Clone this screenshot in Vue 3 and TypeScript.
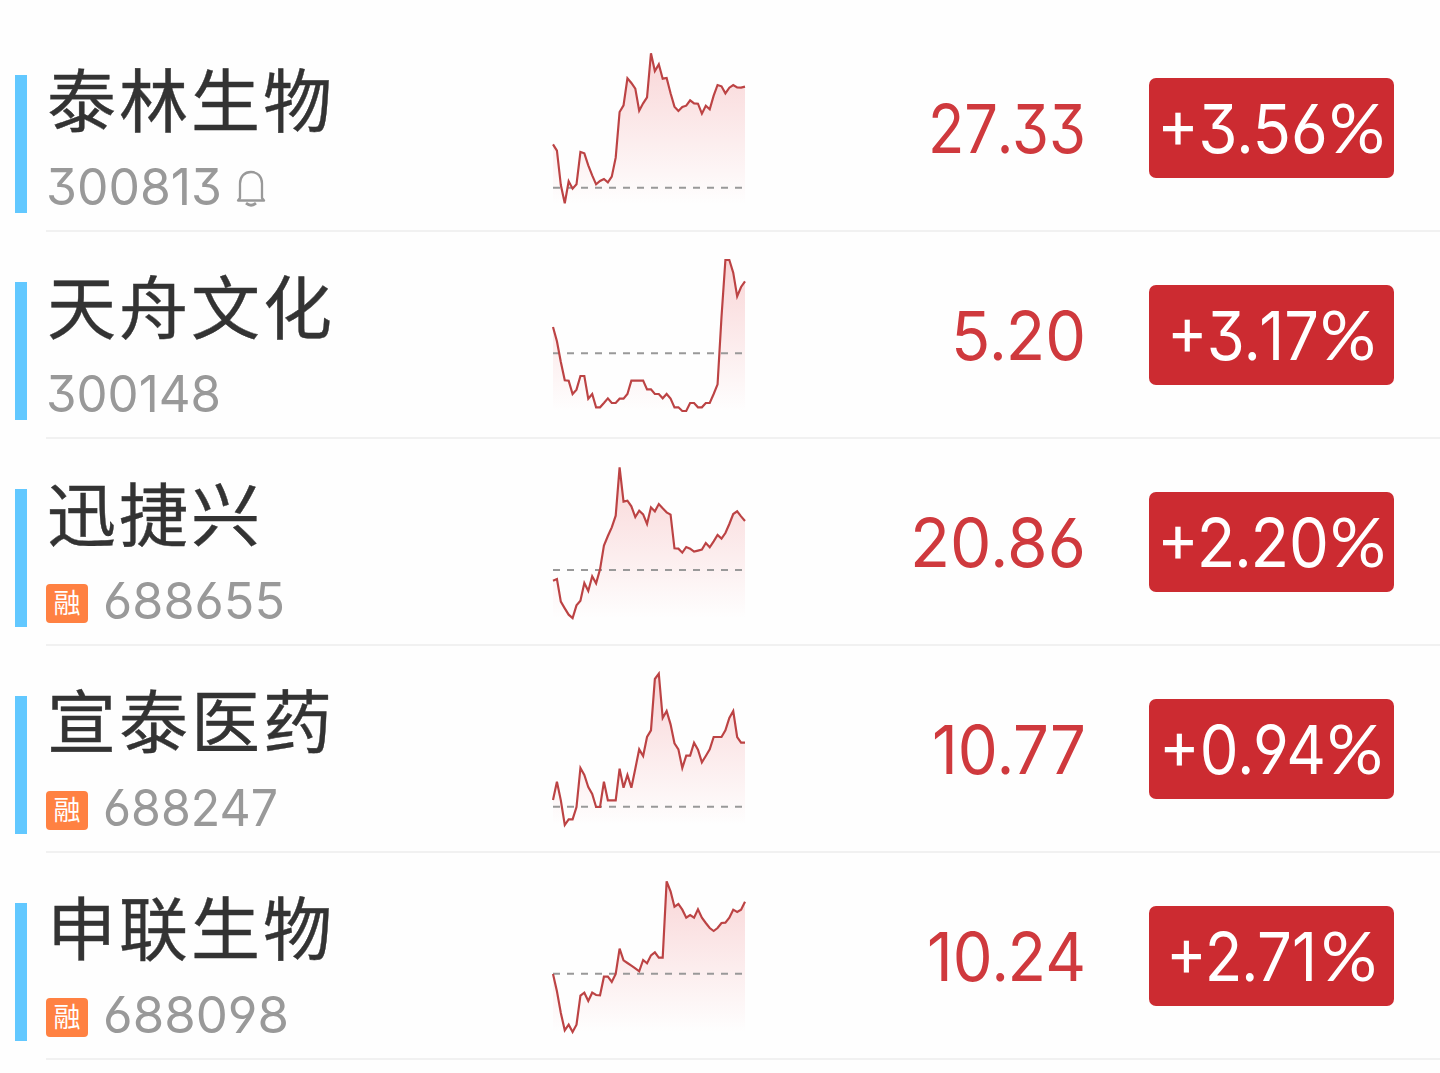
<script setup lang="ts">
interface Figure {
  text: string
  /** drawn width in px */
  width: number
}

interface Stock {
  name: string
  code: Figure
  margin: boolean
  alert: boolean
  price: Figure
  change: Figure
  baseline: number
  trend: number[]
}

const stocks: Stock[] = [
  {
    name: '泰林生物',
    code: { text: '300813', width: 172 },
    margin: false,
    alert: true,
    price: { text: '27.33', width: 153 },
    change: { text: '+3.56', width: 221 },
    baseline: 443,
    trend: [313, 332, 435, 490, 424, 446, 433, 336, 340, 376, 406, 433, 423, 417, 427, 410, 353, 216, 196, 115, 129, 146, 212, 190, 172, 40, 93, 73, 116, 114, 160, 200, 213, 201, 197, 181, 190, 191, 221, 197, 208, 167, 135, 139, 160, 143, 135, 142, 143, 140],
  },
  {
    name: '天舟文化',
    code: { text: '300148', width: 171 },
    margin: false,
    alert: false,
    price: { text: '5.20', width: 130 },
    change: { text: '+3.17', width: 202 },
    baseline: 319,
    trend: [240, 283, 345, 400, 401, 441, 428, 387, 387, 455, 441, 481, 481, 468, 454, 468, 468, 455, 455, 441, 401, 401, 401, 401, 427, 427, 441, 441, 454, 441, 455, 481, 481, 492, 492, 468, 468, 481, 481, 468, 468, 441, 412, 210, 39, 39, 77, 148, 120, 103],
  },
  {
    name: '迅捷兴',
    code: { text: '688655', width: 178 },
    margin: true,
    alert: false,
    price: { text: '20.86', width: 171 },
    change: { text: '+2.20', width: 222 },
    baseline: 348,
    trend: [380, 375, 443, 463, 482, 492, 454, 440, 387, 411, 367, 388, 346, 275, 246, 220, 185, 40, 143, 140, 157, 189, 170, 181, 210, 160, 172, 150, 163, 175, 182, 283, 284, 296, 279, 284, 293, 290, 287, 267, 280, 262, 243, 254, 237, 210, 180, 172, 187, 201],
  },
  {
    name: '宣泰医药',
    code: { text: '688247', width: 171 },
    margin: true,
    alert: false,
    price: { text: '10.77', width: 149 },
    change: { text: '+0.94', width: 217 },
    baseline: 437,
    trend: [417, 362, 418, 492, 475, 475, 438, 321, 342, 378, 399, 438, 438, 362, 418, 418, 418, 323, 380, 342, 380, 323, 265, 285, 228, 208, 54, 38, 171, 150, 190, 247, 265, 321, 284, 284, 245, 266, 304, 285, 265, 228, 228, 228, 208, 171, 150, 228, 245, 245],
  },
  {
    name: '申联生物',
    code: { text: '688098', width: 182 },
    margin: true,
    alert: false,
    price: { text: '10.24', width: 154 },
    change: { text: '+2.71', width: 204 },
    baseline: 317,
    trend: [318, 370, 435, 487, 470, 492, 470, 383, 374, 399, 374, 381, 382, 326, 326, 342, 318, 242, 277, 285, 293, 301, 310, 276, 286, 262, 253, 269, 269, 40, 70, 116, 108, 125, 149, 141, 149, 124, 149, 165, 180, 189, 180, 165, 164, 149, 125, 132, 125, 101],
  },
]

const whole = (value: string): string => value.split('.')[0]
const decimals = (value: string): string => value.split('.')[1]

const linePoints = (trend: number[]): string =>
  trend.map((y, i) => `${((i * 576) / (trend.length - 1)).toFixed(1)},${y}`).join(' ')

const areaPoints = (trend: number[]): string => `0,492 ${linePoints(trend)} 576,492`
</script>

<template>
  <main class="watchlist">
    <article v-for="stock in stocks" :key="stock.code.text" class="row">
      <span class="marker"></span>
      <div class="body">
        <div class="identity">
          <h2 class="name">{{ stock.name }}</h2>
          <div class="meta">
            <span v-if="stock.margin" class="tag">融</span>
            <svg class="code" :width="stock.code.width" height="52">
              <text x="-2" y="45" :textLength="stock.code.width + 4" lengthAdjust="spacingAndGlyphs">{{ stock.code.text }}</text>
            </svg>
            <svg v-if="stock.alert" class="bell" width="30" height="37" viewBox="0 0 30 37" fill="none" stroke="#999" stroke-width="2.300">
              <path d="M4 28V13.500C4 6.500 8.500 2 15 2s11 4.500 11 11.500V28l2 2.500H2Z" stroke-linejoin="round" />
              <path d="M10 33.200q5 4 10 0" stroke-width="2.800" />
            </svg>
          </div>
        </div>
        <svg class="chart" width="192" height="180" viewBox="0 0 576 540">
          <defs>
            <linearGradient :id="`fade-${stock.code.text}`" x1="0" y1="40" x2="0" y2="492" gradientUnits="userSpaceOnUse">
              <stop offset="0" stop-color="#e6343a" stop-opacity="0.2" />
              <stop offset="1" stop-color="#e6343a" stop-opacity="0" />
            </linearGradient>
          </defs>
          <polygon :points="areaPoints(stock.trend)" :fill="`url(#fade-${stock.code.text})`" />
          <line x1="0" x2="576" :y1="stock.baseline" :y2="stock.baseline" class="base" />
          <polyline :points="linePoints(stock.trend)" class="line" />
        </svg>
        <div class="price">
          <svg :width="stock.price.width" height="70">
            <text x="-3" y="60" :textLength="stock.price.width + 5" lengthAdjust="spacingAndGlyphs">{{ whole(stock.price.text) }}<tspan class="round">.</tspan>{{ decimals(stock.price.text) }}</text>
          </svg>
        </div>
        <div class="change">
          <svg :width="stock.change.width" height="70">
            <text x="-4" y="60" :textLength="stock.change.width - (stock.change.text.endsWith('1') ? 53 : 50)" lengthAdjust="spacingAndGlyphs">{{ whole(stock.change.text) }}<tspan class="round">.</tspan>{{ decimals(stock.change.text) }}</text>
            <text class="round" :x="stock.change.width - 53" y="60" textLength="56" lengthAdjust="spacingAndGlyphs">%</text>
          </svg>
        </div>
      </div>
    </article>
  </main>
</template>

<style>
body {
  margin: 0;
  background: #fefefe;
}
</style>

<style scoped>
.watchlist {
  box-sizing: border-box;
  width: 1440px;
  height: 1073px;
  padding-top: 25px;
  overflow: hidden;
  background: #fefefe;
  font-family: Inter, 'Noto Sans CJK SC', sans-serif;
}
.row {
  display: flex;
  height: 207px;
}
.marker {
  width: 12px;
  height: 138px;
  margin: 50px 19px 0 15px;
  background: #62c8ff;
}
.body {
  box-sizing: border-box;
  display: flex;
  flex: 1;
  border-bottom: 2px solid #f1f1f1;
}
.identity {
  width: 507px;
  padding-top: 23px;
}
.name {
  margin: 0 0 0 1px;
  height: 100px;
  color: #333;
  font: 400 69px/99px 'Noto Sans CJK SC', sans-serif;
  letter-spacing: 3px;
  -webkit-text-stroke: 0.4px #333;
}
.meta {
  display: flex;
  align-items: center;
  height: 52px;
  margin-top: 12px;
}
.tag {
  width: 42px;
  height: 39px;
  margin: 7px 15px 0 0;
  border-radius: 4px;
  background: #ff8142;
  color: #fff;
  font: 400 27px/36px 'Noto Sans CJK SC', sans-serif;
  text-align: center;
}
svg {
  display: block;
  overflow: visible;
}
text {
  font-family: Inter, sans-serif;
  font-size: 67.500px;
  font-feature-settings: 'cv03' 1, 'cv04' 1, 'cv09' 1;
}
.code {
  margin-left: 2px;
}
.code text {
  font-size: 51px;
  fill: #999;
}
.bell {
  margin: 4px 0 0 16px;
}
.chart {
  margin-top: 15px;
}
.base {
  stroke: #999;
  stroke-width: 6;
  stroke-dasharray: 21 21;
}
.line {
  fill: none;
  stroke: #bc4344;
  stroke-width: 6.500;
  stroke-linejoin: miter;
}
.price {
  display: flex;
  justify-content: flex-end;
  width: 339px;
  padding-top: 68px;
}
.price text {
  fill: #cf393d;
}
.change {
  display: flex;
  align-items: center;
  justify-content: center;
  box-sizing: border-box;
  width: 245px;
  height: 100px;
  margin: 53px 0 0 65px;
  border-radius: 7px;
  background: #cc2b31;
}
.change text {
  fill: #fff;
}
.round {
  font-family: Lato, sans-serif;
}
</style>
